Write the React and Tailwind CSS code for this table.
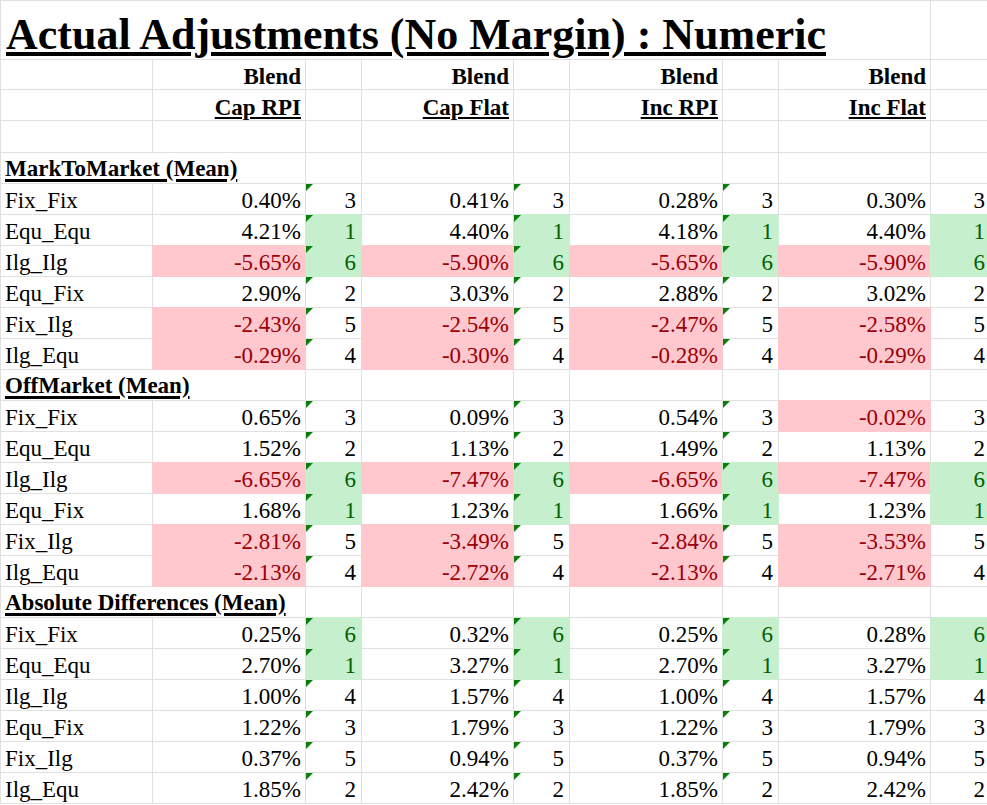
import { Fragment } from 'react'

const WIDTHS = ['w-[152px]', 'w-[153px]', 'w-[56px]', 'w-[152px]', 'w-[56px]', 'w-[153px]', 'w-[56px]', 'w-[152px]', 'w-[60px]']

const HEADERS = ['Cap RPI', 'Cap Flat', 'Inc RPI', 'Inc Flat']

const SECTIONS = [
  {
    title: 'MarkToMarket (Mean)',
    rows: [
      ['Fix_Fix', ['0.40%', 3], ['0.41%', 3], ['0.28%', 3], ['0.30%', 3]],
      ['Equ_Equ', ['4.21%', 1], ['4.40%', 1], ['4.18%', 1], ['4.40%', 1]],
      ['Ilg_Ilg', ['-5.65%', 6], ['-5.90%', 6], ['-5.65%', 6], ['-5.90%', 6]],
      ['Equ_Fix', ['2.90%', 2], ['3.03%', 2], ['2.88%', 2], ['3.02%', 2]],
      ['Fix_Ilg', ['-2.43%', 5], ['-2.54%', 5], ['-2.47%', 5], ['-2.58%', 5]],
      ['Ilg_Equ', ['-0.29%', 4], ['-0.30%', 4], ['-0.28%', 4], ['-0.29%', 4]],
    ],
  },
  {
    title: 'OffMarket (Mean)',
    rows: [
      ['Fix_Fix', ['0.65%', 3], ['0.09%', 3], ['0.54%', 3], ['-0.02%', 3]],
      ['Equ_Equ', ['1.52%', 2], ['1.13%', 2], ['1.49%', 2], ['1.13%', 2]],
      ['Ilg_Ilg', ['-6.65%', 6], ['-7.47%', 6], ['-6.65%', 6], ['-7.47%', 6]],
      ['Equ_Fix', ['1.68%', 1], ['1.23%', 1], ['1.66%', 1], ['1.23%', 1]],
      ['Fix_Ilg', ['-2.81%', 5], ['-3.49%', 5], ['-2.84%', 5], ['-3.53%', 5]],
      ['Ilg_Equ', ['-2.13%', 4], ['-2.72%', 4], ['-2.13%', 4], ['-2.71%', 4]],
    ],
  },
  {
    title: 'Absolute Differences (Mean)',
    rows: [
      ['Fix_Fix', ['0.25%', 6], ['0.32%', 6], ['0.25%', 6], ['0.28%', 6]],
      ['Equ_Equ', ['2.70%', 1], ['3.27%', 1], ['2.70%', 1], ['3.27%', 1]],
      ['Ilg_Ilg', ['1.00%', 4], ['1.57%', 4], ['1.00%', 4], ['1.57%', 4]],
      ['Equ_Fix', ['1.22%', 3], ['1.79%', 3], ['1.22%', 3], ['1.79%', 3]],
      ['Fix_Ilg', ['0.37%', 5], ['0.94%', 5], ['0.37%', 5], ['0.94%', 5]],
      ['Ilg_Equ', ['1.85%', 2], ['2.42%', 2], ['1.85%', 2], ['2.42%', 2]],
    ],
  },
]

const FILLS = {
  red: 'bg-[#ffc7ce] border-[#ffc7ce] text-[#9c0006] shadow-[-1px_-1px_0_#ffc7ce]',
  green: 'bg-[#c6efce] border-[#c6efce] text-[#006100] shadow-[-1px_-1px_0_#c6efce]',
}

// little green "number stored as text" marker in the corner
function Flag() {
  return (
    <svg className="absolute left-0 top-0" width="7" height="7" viewBox="0 0 7 7">
      <polygon points="0,0 7,0 0,7" fill="#0a7d0a" />
    </svg>
  )
}

function Cell({ w, fill, right, flag, pb = 'pb-[1px]', className = '', children }) {
  return (
    <div
      className={`relative box-border flex h-full shrink-0 items-end border-r border-b ${pb} ${w} ${
        fill ? FILLS[fill] : 'border-[#e0e0e0]'
      } ${right ? 'justify-end pr-[4px]' : 'pl-[4px]'} ${className}`}
    >
      {flag && <Flag />}
      {children}
    </div>
  )
}

function Row({ h = 'h-[31px]', children }) {
  return <div className={`flex ${h}`}>{children}</div>
}

export default function App() {
  return (
    <div className="h-[805px] w-[987px] overflow-hidden bg-white font-['Liberation_Serif','Times_New_Roman',serif] text-[23px] leading-[25px] text-black">
      <div className="border-t border-l border-[#e0e0e0]">
        <Row h="h-[59px]">
          <Cell w="w-[930px]" pb="pb-0" className="pl-[5px]">
            <span className="text-[44px] leading-[48px] font-bold underline decoration-[4px] underline-offset-[3px]">
              Actual Adjustments (No Margin) : Numeric
            </span>
          </Cell>
          <Cell w={WIDTHS[8]} />
        </Row>

        <Row h="h-[30px]">
          <Cell w={WIDTHS[0]} />
          {HEADERS.map((hd, i) => (
            <Fragment key={hd}>
              <Cell w={WIDTHS[1 + i * 2]} right pb="pb-0" className="font-bold">
                Blend
              </Cell>
              <Cell w={WIDTHS[2 + i * 2]} />
            </Fragment>
          ))}
        </Row>

        <Row h="h-[31px]">
          <Cell w={WIDTHS[0]} />
          {HEADERS.map((hd, i) => (
            <Fragment key={hd}>
              <Cell w={WIDTHS[1 + i * 2]} right pb="pb-0" className="font-bold">
                <span className="underline decoration-2 underline-offset-[2px]">{hd}</span>
              </Cell>
              <Cell w={WIDTHS[2 + i * 2]} />
            </Fragment>
          ))}
        </Row>

        <Row h="h-[32px]">
          {WIDTHS.map((w, i) => (
            <Cell key={i} w={w} />
          ))}
        </Row>

        {SECTIONS.map((sec) => (
          <Fragment key={sec.title}>
            <Row>
              <Cell w="w-[305px]" pb="pb-[2px]" className="whitespace-nowrap">
                <span className="font-bold underline decoration-[2.5px] underline-offset-[3px]">{sec.title}</span>
              </Cell>
              {WIDTHS.slice(2).map((w, i) => (
                <Cell key={i} w={w} />
              ))}
            </Row>
            {sec.rows.map(([label, ...vals]) => (
              <Row key={label}>
                <Cell w={WIDTHS[0]}>{label}</Cell>
                {vals.map(([v, rank], i) => (
                  <Fragment key={i}>
                    <Cell w={WIDTHS[1 + i * 2]} right fill={v.startsWith('-') ? 'red' : null}>
                      {v}
                    </Cell>
                    <Cell
                      w={WIDTHS[2 + i * 2]}
                      right
                      flag={i < 3}
                      fill={rank === 1 || rank === 6 ? 'green' : null}
                      className="pr-[5px]"
                    >
                      {rank}
                    </Cell>
                  </Fragment>
                ))}
              </Row>
            ))}
          </Fragment>
        ))}
      </div>
    </div>
  )
}
